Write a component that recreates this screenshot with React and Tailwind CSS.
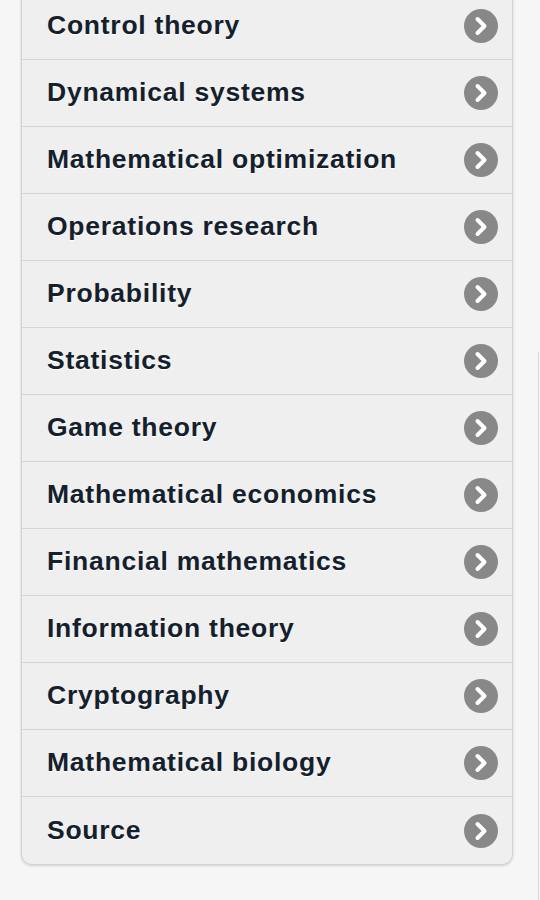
const items = [
  "Control theory",
  "Dynamical systems",
  "Mathematical optimization",
  "Operations research",
  "Probability",
  "Statistics",
  "Game theory",
  "Mathematical economics",
  "Financial mathematics",
  "Information theory",
  "Cryptography",
  "Mathematical biology",
  "Source",
];

function ArrowIcon() {
  return (
    <svg width="34" height="34" viewBox="0 0 34 34" className="shrink-0">
      <circle cx="17" cy="17" r="17" fill="#888888" />
      <path
        d="M13.5 10 L20.5 17 L13.5 24"
        fill="none"
        stroke="#fff"
        strokeWidth="4"
        strokeLinecap="round"
        strokeLinejoin="round"
      />
    </svg>
  );
}

export default function App() {
  return (
    <div className="relative min-h-[900px] w-[540px] overflow-hidden bg-[#f6f6f6] font-['Liberation_Sans',Arial,sans-serif]">
      {/* faint line on the right edge */}
      <div className="absolute right-[1px] top-[352px] bottom-0 w-px bg-[#d6d6d6]"></div>

      <ul className="-mt-2 ml-[21px] w-[492px] rounded-b-[11px] border border-[#d2d2d2] bg-[#efefef] shadow-[0_1px_3px_rgba(0,0,0,0.15)]">
        {items.map((item, i) => (
          <li
            key={item}
            className={
              "flex h-[67px] items-center justify-between pl-[25px] pr-[14px] " +
              (i < items.length - 1 ? "border-b border-[#d4d4d4]" : "")
            }
          >
            <span className="text-[26.5px] font-bold tracking-[0.75px] text-[#14202c] [text-shadow:0_1px_0_#fff]">
              {item}
            </span>
            <ArrowIcon />
          </li>
        ))}
      </ul>
    </div>
  );
}
